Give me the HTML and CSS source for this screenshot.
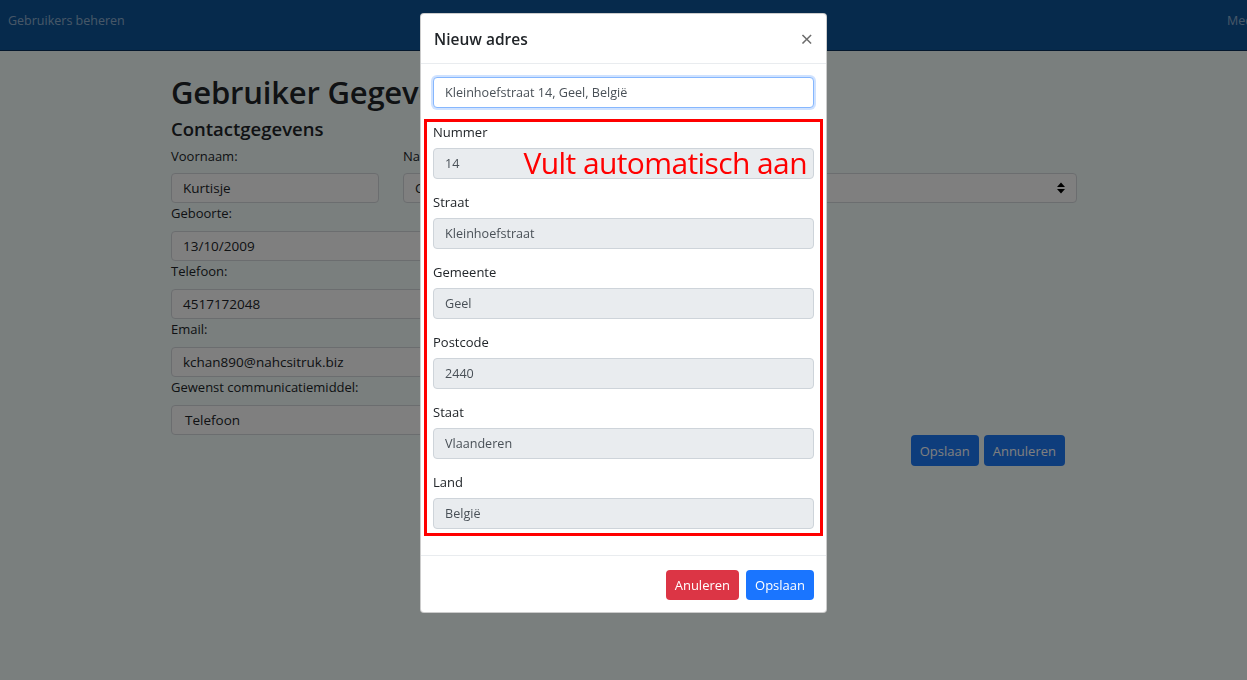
FILE: index.html
```html
<!DOCTYPE html>
<html lang="nl">
<head>
<meta charset="utf-8">
<title>Gebruiker Gegevens</title>
<link rel="stylesheet" href="styles.css">
</head>
<body>
<nav class="navbar">
  <a class="brand">Gebruikers beheren</a>
  <a class="nav-right">Medewerkers</a>
</nav>
<main class="container">
  <h1 class="title">Gebruiker Gegevens</h1>
  <h2 class="subtitle">Contactgegevens</h2>
  <div class="row3">
    <div class="field">
      <label class="lbl">Voornaam:</label>
      <div class="ctl">Kurtisje</div>
    </div>
    <div class="field">
      <label class="lbl">Naam:</label>
      <div class="ctl">Chan</div>
    </div>
    <div class="field">
      <label class="lbl">Geslacht:</label>
      <div class="ctl select">Man<span class="arrows"><svg width="8" height="12" viewBox="0 0 8 12"><path d="M0 5 L4 0.5 L8 5 Z M0 7 L4 11.5 L8 7 Z" fill="#000"/></svg></span></div>
    </div>
  </div>
  <div class="stack">
    <label class="lbl">Geboorte:</label>
    <div class="ctl wide">13/10/2009</div>
    <label class="lbl">Telefoon:</label>
    <div class="ctl wide">4517172048</div>
    <label class="lbl">Email:</label>
    <div class="ctl wide">kchan890@nahcsitruk.biz</div>
    <label class="lbl">Gewenst communicatiemiddel:</label>
    <div class="ctl wide sel">Telefoon</div>
  </div>
  <div class="actions">
    <button class="btn btn-primary">Opslaan</button>
    <button class="btn btn-primary">Annuleren</button>
  </div>
</main>

<div class="backdrop">
  <div class="modal">
    <div class="modal-header">
      <h5 class="modal-title">Nieuw adres</h5>
      <span class="close">&times;</span>
    </div>
    <div class="modal-body">
      <div class="input focus">Kleinhoefstraat 14, Geel, België</div>
      <div class="auto-box">
        <span class="note">Vult automatisch aan</span>
        <div class="group"><label class="mlbl">Nummer</label><div class="input disabled">14</div></div>
        <div class="group"><label class="mlbl">Straat</label><div class="input disabled">Kleinhoefstraat</div></div>
        <div class="group"><label class="mlbl">Gemeente</label><div class="input disabled">Geel</div></div>
        <div class="group"><label class="mlbl">Postcode</label><div class="input disabled">2440</div></div>
        <div class="group"><label class="mlbl">Staat</label><div class="input disabled">Vlaanderen</div></div>
        <div class="group"><label class="mlbl">Land</label><div class="input disabled">België</div></div>
      </div>
    </div>
    <div class="modal-footer">
      <button class="btn btn-danger">Anuleren</button>
      <button class="btn btn-blue">Opslaan</button>
    </div>
  </div>
</div>
</body>
</html>
```
FILE: styles.css
```css
* { box-sizing: border-box; }
html, body { margin: 0; padding: 0; }
body {
  width: 1247px;
  height: 680px;
  overflow: hidden;
  background: #f5fffd;
  font-family: "Open Sans", "Noto Sans", sans-serif;
  color: #212529;
  font-size: 14px;
}
.navbar {
  height: 51px;
  background: #0c5499;
  border-bottom: 1px solid #082f5a;
  display: flex;
  align-items: center;
  padding: 0 8px;
  position: relative;
  white-space: nowrap;
}
.brand {
  color: rgba(255,255,255,.55);
  font-size: 12.5px;
  margin-top: -10px;
}
.nav-right {
  color: rgba(255,255,255,.55);
  font-size: 12.5px;
  margin-left: auto;
  margin-right: -108px;
  width: 120px;
  margin-top: -10px;
}
.container {
  padding: 0 170px 0 171px;
}
.title {
  font-size: 31px;
  font-weight: 600;
  margin: 20px 0 0;
  line-height: 42px;
  letter-spacing: -0.2px;
}
.subtitle {
  font-size: 18.5px;
  font-weight: 600;
  margin: 2px 0 0;
  line-height: 28px;
}
.lbl {
  display: block;
  font-size: 13px;
  line-height: 20px;
  color: #212529;
}
.row3 {
  display: grid;
  grid-template-columns: 208px 208px 1fr;
  column-gap: 24px;
  margin-top: 3px;
}
.row3 .lbl { margin-bottom: 7px; }
.ctl {
  height: 30px;
  border: 1px solid #d7dbdf;
  border-radius: 4px;
  background: #fff;
  padding: 0 11px;
  display: flex;
  align-items: center;
  font-size: 13.5px;
  color: #212529;
}
.select { justify-content: space-between; }
.arrows { display: flex; }
.stack {
  display: flex;
  flex-direction: column;
  align-items: flex-start;
}
.stack .lbl { line-height: 20px; margin-bottom: 8px; }
.stack .ctl.wide { width: 460px; }
.sel { padding-left: 13px; }
.actions {
  display: flex;
  justify-content: flex-end;
  gap: 5px;
  padding-right: 12px;
}
.btn {
  border: 1px solid transparent;
  border-radius: 4px;
  font-family: inherit;
  font-size: 13px;
  height: 31px;
  padding: 0 8px;
  color: #fff;
  cursor: pointer;
}
.btn-primary { background: #1d7af8; }
.btn-danger { background: #dc3545; }
.btn-blue { background: #1a75ff; }

.backdrop {
  position: fixed;
  inset: 0;
  background: rgba(0,0,0,.5);
  display: flex;
  justify-content: center;
  align-items: flex-start;
}
.modal {
  width: 407px;
  margin-top: 13px;
  background: #fff;
  border: 1px solid rgba(0,0,0,.2);
  border-radius: 4px;
  display: flex;
  flex-direction: column;
}
.modal-header {
  display: flex;
  align-items: center;
  justify-content: space-between;
  height: 50px;
  padding: 0 13px;
  border-bottom: 1px solid #e9ecef;
}
.modal-title {
  margin: 0;
  font-size: 15.5px;
  font-weight: 600;
  color: #212529;
}
.close {
  font-size: 22px;
  color: #6c6c6c;
  font-weight: 400;
  line-height: 1;
  margin-top: -2px;
}
.modal-body {
  padding: 13px 12px 19px;
}
.input {
  height: 31px;
  border: 1px solid #ced4da;
  border-radius: 4px;
  padding: 0 11px;
  display: flex;
  align-items: center;
  font-size: 12.6px;
  color: #495057;
  background: #fff;
}
.input.focus {
  border-color: #86b7fe;
  box-shadow: 0 0 0 2px rgba(13,110,253,.2);
}
.input.disabled { background: #e9ecef; }
.auto-box {
  position: relative;
  margin: 11px -9px 0;
  border: 3px solid #f00;
  padding: 0 6px 4px;
}
.group { display: flex; flex-direction: column; }
.group + .group { margin-top: 13px; }
.mlbl {
  font-size: 13px;
  line-height: 21px;
  margin-bottom: 5px;
  color: #212529;
}
.note {
  position: absolute;
  top: 21px;
  right: 13px;
  font-size: 30px;
  line-height: 40px;
  letter-spacing: -0.6px;
  color: #f00;
  font-family: "Open Sans", "Noto Sans", sans-serif;
}
.modal-footer {
  border-top: 1px solid #e9ecef;
  display: flex;
  justify-content: flex-end;
  gap: 7px;
  padding: 14px 12px 12px;
}
.modal-footer .btn { height: 30px; }
```
